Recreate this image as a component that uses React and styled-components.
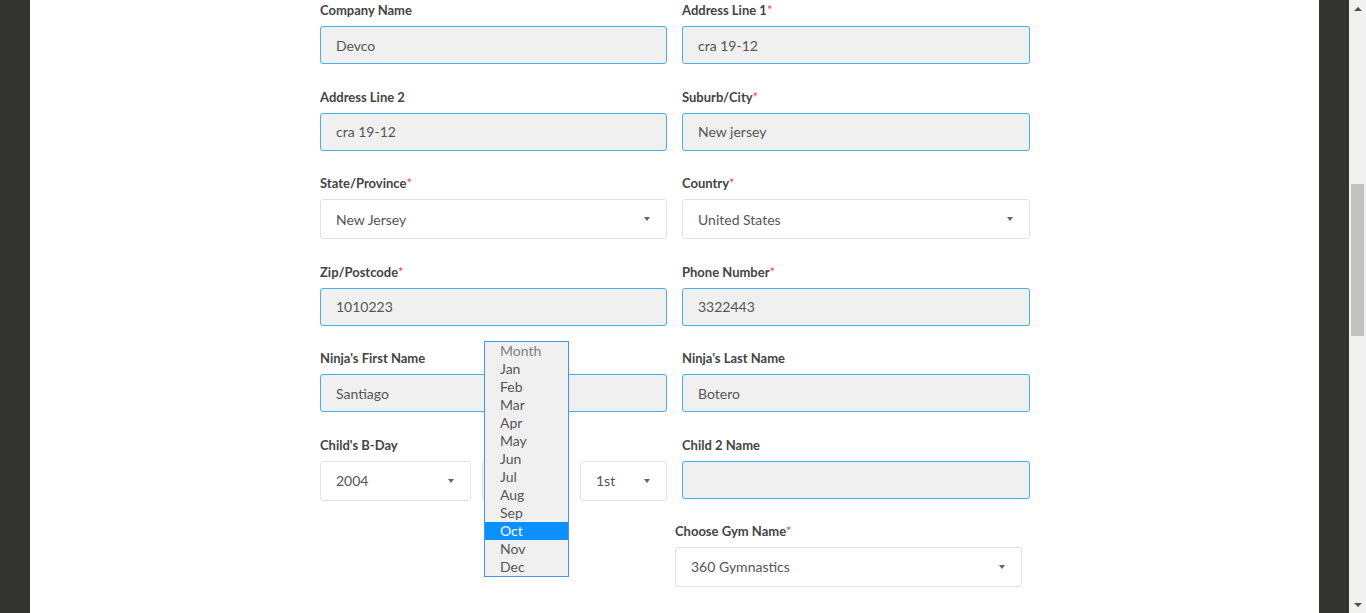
import styled, { createGlobalStyle } from 'styled-components';

const GlobalStyle = createGlobalStyle`
  html, body {
    margin: 0;
    padding: 0;
    height: 613px;
    overflow: hidden;
    background: #fff;
  }
  * { box-sizing: border-box; }
`;

const months = ['Jan','Feb','Mar','Apr','May','Jun','Jul','Aug','Sep','Oct','Nov','Dec'];

const App = () =>
{
    return(
        <Page>
            <GlobalStyle />
            <SideBar />
            <Content>
                <Form>
                    <Grid>
                        <Field>
                            <Label>Company Name</Label>
                            <Input>Devco</Input>
                        </Field>
                        <Field>
                            <Label>Address Line 1<Star>*</Star></Label>
                            <Input>cra 19-12</Input>
                        </Field>
                        <Field>
                            <Label>Address Line 2</Label>
                            <Input>cra 19-12</Input>
                        </Field>
                        <Field>
                            <Label>Suburb/City<Star>*</Star></Label>
                            <Input>New jersey</Input>
                        </Field>
                        <Field>
                            <Label>State/Province<Star>*</Star></Label>
                            <Select>New Jersey<Arrow /></Select>
                        </Field>
                        <Field>
                            <Label>Country<Star>*</Star></Label>
                            <Select>United States<Arrow /></Select>
                        </Field>
                        <Field>
                            <Label>Zip/Postcode<Star>*</Star></Label>
                            <Input>1010223</Input>
                        </Field>
                        <Field>
                            <Label>Phone Number<Star>*</Star></Label>
                            <Input>3322443</Input>
                        </Field>
                        <Field>
                            <Label>Ninja's First Name</Label>
                            <Input>Santiago</Input>
                        </Field>
                        <Field>
                            <Label>Ninja's Last Name</Label>
                            <Input>Botero</Input>
                        </Field>
                        <Field>
                            <Label>Child's B-Day</Label>
                            <DateRow>
                                <Select>2004<Arrow /></Select>
                                <MonthWrap>
                                    <Select><Arrow /></Select>
                                    <ListBox>
                                        <Option $placeholder>Month</Option>
                                        {months.map((m) => (
                                            <Option key={m} $active={m === 'Oct'}>{m}</Option>
                                        ))}
                                    </ListBox>
                                </MonthWrap>
                                <Select>1st<Arrow /></Select>
                            </DateRow>
                        </Field>
                        <Field>
                            <Label>Child 2 Name</Label>
                            <Input />
                        </Field>
                    </Grid>
                    <GymRow>
                        <Field>
                            <Label>Choose Gym Name<Star>*</Star></Label>
                            <Select>360 Gymnastics<Arrow /></Select>
                        </Field>
                    </GymRow>
                </Form>
            </Content>
            <SideBar />
            <ScrollBar>
                <ScrollArrow />
                <Track>
                    <Thumb />
                </Track>
                <ScrollArrow $down />
            </ScrollBar>
        </Page>
    )
}

const Page = styled.div`
    display:flex;
    height:613px;
    font-family:Lato, "Open Sans", sans-serif;
`
const SideBar = styled.div`
    width:30px;
    flex:none;
    background-color:#333331;
`
const Content = styled.div`
    flex:1;
    background-color:#fff;
    display:flex;
    justify-content:center;
    padding-top:1px;
    padding-left:1px;
`
const Form = styled.div`
    width:710px;
`
const Grid = styled.div`
    display:grid;
    grid-template-columns:347px 348px;
    column-gap:15px;
    row-gap:23.5px;
`
const Field = styled.div`
    display:flex;
    flex-direction:column;
    width:100%;
`
const Label = styled.div`
    font-size:13px;
    font-weight:700;
    color:#444;
    line-height:18px;
    height:18px;
    margin-bottom:7px;
    white-space:nowrap;
`
const Star = styled.span`
    color:#e8474b;
    font-weight:400;
`
const Input = styled.div`
    height:38px;
    background-color:#f0f0f0;
    border:1px solid #45b1e8;
    border-radius:3px;
    padding:0 15px;
    display:flex;
    align-items:center;
    font-size:14px;
    color:#555;
`
const Select = styled.div`
    position:relative;
    height:40px;
    background-color:#fff;
    border:1px solid #e3e3e3;
    border-radius:3px;
    padding:0 15px;
    display:flex;
    align-items:center;
    font-size:14px;
    color:#555;
`
const Arrow = styled.span`
    position:absolute;
    right:16px;
    top:50%;
    margin-top:-2px;
    width:0;
    height:0;
    border-left:3.5px solid transparent;
    border-right:3.5px solid transparent;
    border-top:4px solid #666;
`
const DateRow = styled.div`
    display:grid;
    grid-template-columns:151px 87px 87px;
    justify-content:space-between;
`
const MonthWrap = styled.div`
    position:relative;
`
const ListBox = styled.div`
    position:absolute;
    left:2px;
    top:-120px;
    width:85px;
    background-color:#f0f0f0;
    border:1px solid #4a94e0;
    z-index:5;
`
const Option = styled.div`
    height:18px;
    line-height:18px;
    padding-left:15px;
    font-size:14px;
    color:${(p) => (p.$active ? '#fff' : p.$placeholder ? '#808080' : '#555')};
    background-color:${(p) => (p.$active ? '#0a90ff' : 'transparent')};
`
const GymRow = styled.div`
    display:flex;
    justify-content:flex-end;
    padding-right:8px;
    margin-top:21px;
    & > div {
        width:347px;
    }
`
const ScrollBar = styled.div`
    width:17px;
    flex:none;
    background-color:#f1f1f1;
    display:flex;
    flex-direction:column;
    align-items:center;
`
const ScrollArrow = styled.div`
    height:17px;
    width:17px;
    flex:none;
    display:flex;
    align-items:center;
    justify-content:center;
    &::before {
        content:'';
        width:0;
        height:0;
        border-left:4px solid transparent;
        border-right:4px solid transparent;
        ${(p) => (p.$down ? 'border-top:4px solid #505050;' : 'border-bottom:4px solid #505050;')}
    }
`
const Track = styled.div`
    flex:1;
    width:100%;
    padding-top:167px;
    display:flex;
    justify-content:center;
`
const Thumb = styled.div`
    width:13px;
    height:152px;
    background-color:#c1c1c1;
`

export default App;
